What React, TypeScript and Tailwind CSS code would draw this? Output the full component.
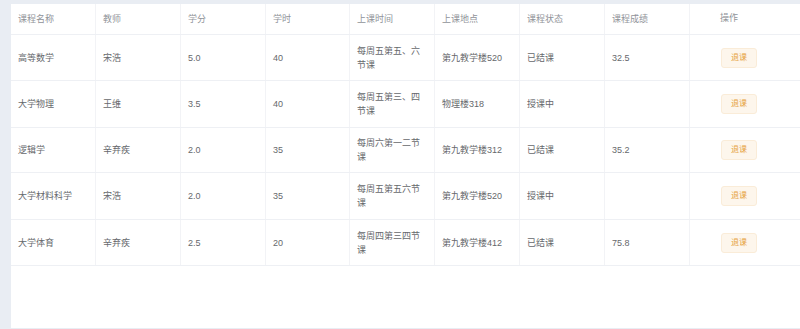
import React from "react";

type Course = {
  name: string;
  teacher: string;
  credit: string;
  hours: string;
  time: string;
  place: string;
  status: string;
  score: string;
  h: string;
};

const headers = ["课程名称", "教师", "学分", "学时", "上课时间", "上课地点", "课程状态", "课程成绩"];

const courses: Course[] = [
  { name: "高等数学", teacher: "宋浩", credit: "5.0", hours: "40", time: "每周五第五、六节课", place: "第九教学楼520", status: "已结课", score: "32.5", h: "h-[46px]" },
  { name: "大学物理", teacher: "王维", credit: "3.5", hours: "40", time: "每周五第三、四节课", place: "物理楼318", status: "授课中", score: "", h: "h-[47px]" },
  { name: "逻辑学", teacher: "辛弃疾", credit: "2.0", hours: "35", time: "每周六第一二节课", place: "第九教学楼312", status: "已结课", score: "35.2", h: "h-[45px]" },
  { name: "大学材料科学", teacher: "宋浩", credit: "2.0", hours: "35", time: "每周五第五六节课", place: "第九教学楼520", status: "授课中", score: "", h: "h-[47px]" },
  { name: "大学体育", teacher: "辛弃疾", credit: "2.5", hours: "20", time: "每周四第三四节课", place: "第九教学楼412", status: "已结课", score: "75.8", h: "h-[46px]" },
];

const cols = "grid grid-cols-[85px_85px_85px_84px_85px_85px_85px_85px_1fr]";
const cell = "flex items-center border-r border-[#f2f3f6] px-[7px] leading-[14px]";

export default function App() {
  return (
    <div className="h-[329px] w-[800px] overflow-hidden bg-[#e9edf3] pl-[11px] pt-[4px] font-['Liberation_Sans','Noto_Sans_CJK_SC',sans-serif] text-[9px]">
      <div className="h-[324px] bg-white">
        <div className={`${cols} h-[31px] border-b border-[#eef0f4] text-[#909399]`}>
          {headers.map((h) => (
            <div key={h} className={cell}>
              {h}
            </div>
          ))}
          <div className="flex items-center pl-[30px]">操作</div>
        </div>
        {courses.map((c) => (
          <div key={c.name} className={`${cols} ${c.h} border-b border-[#eef0f4] text-[#66686c]`}>
            <div className={cell}>{c.name}</div>
            <div className={cell}>{c.teacher}</div>
            <div className={cell}>{c.credit}</div>
            <div className={cell}>{c.hours}</div>
            <div className={cell}>{c.time}</div>
            <div className={cell}>{c.place}</div>
            <div className={cell}>{c.status}</div>
            <div className={cell}>{c.score}</div>
            <div className="flex items-center pl-[31px]">
              <button className="flex h-[20px] w-[36px] items-center justify-center rounded-[3px] border border-[#faecd8] bg-[#fdf6ec] text-[8px] text-[#e6a23c]">
                退课
              </button>
            </div>
          </div>
        ))}
      </div>
    </div>
  );
}
